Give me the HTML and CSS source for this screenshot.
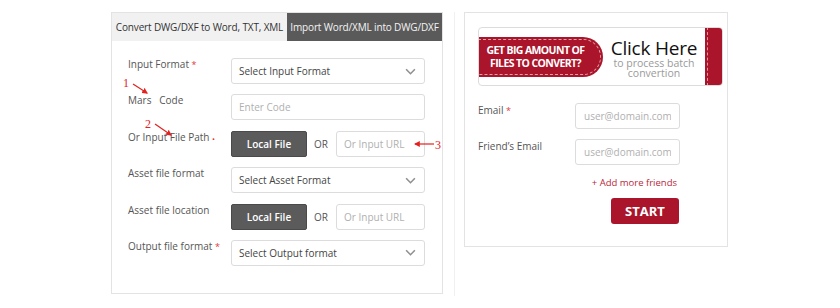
FILE: index.html
```html
<!DOCTYPE html>
<html lang="en">
<head>
    <meta charset="UTF-8">
    <meta name="viewport" content="width=device-width, initial-scale=1.0">
    <title>DWG/DXF Converter</title>
    <link rel="stylesheet" href="styles.css">
</head>
<body>
    <div class="page">
        <div class="left-col">
            <div class="panel convert">
                <div class="tabs">
                    <div class="tab">Convert DWG/DXF to Word, TXT, XML</div>
                    <div class="tab active">Import Word/XML into DWG/DXF</div>
                </div>
                <div class="form">
                    <div class="row">
                        <label class="label">Input Format <span class="req">*</span></label>
                        <div class="select">Select Input Format
                            <svg class="chevron" viewBox="0 0 12 8"><path d="M1 1.5l5 5 5-5"/></svg>
                        </div>
                    </div>
                    <div class="row">
                        <label class="label">Mars&nbsp;&nbsp;&nbsp;Code</label>
                        <input class="field" type="text" placeholder="Enter Code">
                    </div>
                    <div class="row">
                        <label class="label">Or Input File Path <span class="req dot">&bull;</span></label>
                        <div class="file-pick">
                            <button class="local-btn">Local File</button>
                            <span class="or">OR</span>
                            <input class="field url" type="text" placeholder="Or Input URL">
                        </div>
                    </div>
                    <div class="row">
                        <label class="label">Asset file format</label>
                        <div class="select">Select Asset Format
                            <svg class="chevron" viewBox="0 0 12 8"><path d="M1 1.5l5 5 5-5"/></svg>
                        </div>
                    </div>
                    <div class="row">
                        <label class="label">Asset file location</label>
                        <div class="file-pick">
                            <button class="local-btn">Local File</button>
                            <span class="or">OR</span>
                            <input class="field url" type="text" placeholder="Or Input URL">
                        </div>
                    </div>
                    <div class="row">
                        <label class="label">Output file format <span class="req">*</span></label>
                        <div class="select">Select Output format
                            <svg class="chevron" viewBox="0 0 12 8"><path d="M1 1.5l5 5 5-5"/></svg>
                        </div>
                    </div>
                </div>

                <!-- red callouts drawn over the form -->
                <svg class="notes" viewBox="0 0 332 282">
                    <defs>
                        <marker id="head" viewBox="0 0 10 10" refX="8" refY="5" markerWidth="5" markerHeight="5" orient="auto">
                            <path d="M0 0L10 5L0 10z" fill="#e3211f"/>
                        </marker>
                    </defs>
                    <text x="11" y="74">1</text>
                    <line x1="21" y1="71" x2="35" y2="80" marker-end="url(#head)"/>
                    <text x="33" y="115">2</text>
                    <line x1="43" y1="111" x2="59" y2="122" marker-end="url(#head)"/>
                    <text x="323" y="136">3</text>
                    <line x1="322" y1="131" x2="303" y2="131" marker-end="url(#head)"/>
                </svg>
            </div>
        </div>

        <div class="panel batch">
            <div class="banner">
                <div class="pill">GET BIG AMOUNT OF<br>FILES TO CONVERT?</div>
                <div class="click">
                    <div class="click-title">Click Here</div>
                    <div class="click-sub">to process batch<br>convertion</div>
                </div>
                <div class="strip"><span class="stitch"></span></div>
            </div>
            <div class="mail-form">
                <div class="mail-row">
                    <label class="label">Email <span class="req">*</span></label>
                    <input class="field mail" type="text" placeholder="user@domain.com">
                </div>
                <div class="mail-row">
                    <label class="label">Friend&rsquo;s Email</label>
                    <input class="field mail" type="text" placeholder="user@domain.com">
                </div>
                <a class="add-more" href="#">+ Add more friends</a>
                <button class="start-btn">START</button>
            </div>
        </div>
    </div>
</body>
</html>
```

FILE: styles.css
```css
body {
    margin: 0;
    background-color: #ffffff;
    font-family: 'Open Sans', sans-serif;
    color: #555555;
}

.page {
    display: flex;
    align-items: flex-start;
    padding: 12px 0 0 111px;
}

.left-col {
    width: 343px;
    height: 284px;
    border-right: 1px solid #f0f0f0;
}

.panel {
    border: 1px solid #e3e3e3;
    box-sizing: border-box;
    background-color: #ffffff;
}

.convert {
    position: relative;
    width: 332px;
    height: 282px;
}

.tabs {
    display: flex;
    height: 28px;
}

.tab {
    width: 175px;
    background-color: #f1f1f1;
    color: #333333;
    font-size: 10px;
    line-height: 28px;
    text-align: center;
    white-space: nowrap;
    letter-spacing: -0.15px;
}

.tab.active {
    flex: 1;
    background-color: #5a5a5a;
    color: #f4f4f4;
}

.form {
    display: flex;
    flex-direction: column;
    gap: 10.4px;
    padding: 17px 17px 0 16px;
}

.row {
    display: flex;
    align-items: flex-start;
}

.label {
    width: 103px;
    flex-shrink: 0;
    font-size: 10px;
    line-height: 14px;
    color: #555555;
    margin-top: -1px;
    white-space: nowrap;
}

.req {
    color: #e0383b;
    font-size: 9px;
}

.req.dot {
    font-size: 8px;
    position: relative;
    top: 1px;
}

.select,
.field {
    box-sizing: border-box;
    height: 26px;
    border: 1px solid #dcdcdc;
    border-radius: 3px;
    background-color: #ffffff;
    font-family: 'Open Sans', sans-serif;
    font-size: 10px;
}

.select {
    flex: 1;
    display: flex;
    align-items: center;
    justify-content: space-between;
    padding: 0 8px 0 7px;
    color: #444444;
}

.chevron {
    width: 11px;
    height: 7px;
    fill: none;
    stroke: #8f8f8f;
    stroke-width: 1.8;
}

.field {
    flex: 1;
    width: 0;
    min-width: 0;
    padding: 0 7px;
    color: #444444;
    outline: none;
}

.field::placeholder {
    color: #b0b0b0;
}

.file-pick {
    flex: 1;
    min-width: 0;
    display: flex;
    align-items: center;
}

.local-btn {
    width: 76px;
    height: 26px;
    flex-shrink: 0;
    border: 1px solid #4a4a4a;
    border-radius: 2px;
    background-color: #5b5b5b;
    color: #ffffff;
    font-family: 'Open Sans', sans-serif;
    font-size: 10px;
    font-weight: 600;
    padding: 0;
    cursor: pointer;
}

.or {
    width: 29px;
    flex-shrink: 0;
    padding-left: 7px;
    box-sizing: border-box;
    font-size: 10px;
    color: #555555;
}

.notes {
    position: absolute;
    left: 0;
    top: 0;
    width: 332px;
    height: 282px;
    pointer-events: none;
}

.notes text {
    font-family: 'Liberation Serif', serif;
    font-size: 12px;
    fill: #e3211f;
}

.notes line {
    stroke: #e3211f;
    stroke-width: 1.2;
}

/* batch side */

.batch {
    margin-left: 9px;
    width: 264px;
    height: 235px;
    padding: 14px 0 0 13px;
}

.banner {
    display: flex;
    width: 245px;
    height: 59px;
    box-sizing: border-box;
    border: 1px solid #dcdcdc;
    border-radius: 4px;
    overflow: hidden;
}

.pill {
    position: relative;
    flex-shrink: 0;
    width: 125px;
    height: 40px;
    margin: 9px 0 0 -1px;
    padding: 7px 10px 0 0;
    box-sizing: border-box;
    background-color: #aa152b;
    border-radius: 0 20px 20px 0;
    color: #ffffff;
    font-size: 10.5px;
    font-weight: 700;
    line-height: 12.5px;
    letter-spacing: -0.6px;
    text-align: center;
    white-space: nowrap;
}

.pill::before {
    content: "";
    position: absolute;
    top: 2px;
    bottom: 2px;
    left: 0;
    right: 2px;
    border: 1px dashed rgba(255, 255, 255, 0.6);
    border-left: none;
    border-radius: 0 18px 18px 0;
}

.click {
    flex: 1;
    text-align: center;
    padding-top: 10px;
}

.click-title {
    font-size: 19px;
    line-height: 20px;
    color: #111111;
    letter-spacing: -0.2px;
}

.click-sub {
    font-size: 10.5px;
    line-height: 10px;
    color: #9a9a9a;
}

.strip {
    width: 16px;
    flex-shrink: 0;
    margin: -1px -1px -1px 0;
    background-color: #aa152b;
    border-radius: 0 4px 4px 0;
    padding-left: 2px;
}

.stitch {
    display: block;
    height: 100%;
    border-left: 1px dashed rgba(255, 255, 255, 0.55);
}

.mail-form {
    display: flex;
    flex-direction: column;
    align-items: flex-end;
    width: 202px;
    padding-top: 17px;
}

.mail-row {
    display: flex;
    align-items: flex-start;
    width: 100%;
    margin-bottom: 10px;
}

.mail-row .label {
    width: 97px;
    margin-top: 0;
}

.field.mail {
    width: 105px;
    flex: none;
    padding: 0 8px;
}

.add-more {
    margin: 1px 3px 0 0;
    font-size: 9.5px;
    line-height: 14px;
    color: #b8283c;
    text-decoration: none;
}

.start-btn {
    margin: 8px 1px 0 0;
    width: 68px;
    height: 26px;
    border: none;
    border-radius: 3px;
    background-color: #aa152b;
    color: #ffffff;
    font-family: 'Open Sans', sans-serif;
    font-size: 13px;
    font-weight: 700;
    cursor: pointer;
}
```
